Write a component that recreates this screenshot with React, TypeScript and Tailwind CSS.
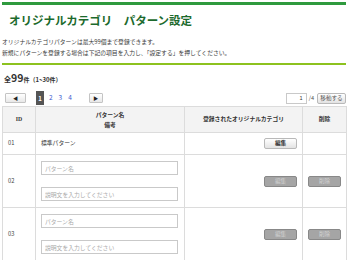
import React from "react";

const rows = [
  { id: "01", fixed: "標準パターン" },
  { id: "02" },
  { id: "03" },
];

const LightButton: React.FC<{ children: React.ReactNode; className?: string }> = ({ children, className }) => (
  <button
    className={`h-[11px] rounded-[2px] border border-[#b9b9b9] bg-gradient-to-b from-white to-[#e3e3e3] text-[5.6px] font-bold leading-[9px] text-[#333] ${className ?? ""}`}
  >
    {children}
  </button>
);

const GrayButton: React.FC<{ children: React.ReactNode }> = ({ children }) => (
  <button className="h-[11px] w-[33px] rounded-[2px] border border-[#888] bg-[#a5a5a5] text-[5.6px] leading-[9px] text-[#d2d2d2]">
    {children}
  </button>
);

export default function App() {
  return (
    <div className="h-[260px] w-[348px] overflow-hidden bg-white px-[2px] pt-[2px] font-['Noto_Sans_CJK_JP',sans-serif] text-[#333]">
      <div className="h-[3px] bg-[#2f9a3e]" />

      <h1 className="ml-[7px] mt-[8px] text-[11.5px] font-bold leading-[14px] text-[#1c6a2d]">
        オリジナルカテゴリ　パターン設定
      </h1>

      <p className="mt-[10px] text-[5.8px] leading-[10.5px] text-[#3a3a3a]">
        オリジナルカテゴリパターンは最大99個まで登録できます。
        <br />
        新規にパターンを登録する場合は下記の項目を入力し、「設定する」を押してください。
      </p>

      <div className="mt-[5px] h-[2px] bg-[#8dc21f]" />

      {/* count */}
      <div className="ml-[2px] mt-[7px] flex items-baseline font-bold leading-[12px] text-[#333]">
        <span className="text-[7px]">全</span>
        <span className="text-[10.5px]">99</span>
        <span className="text-[6px]">件（1~30件）</span>
      </div>

      {/* pager */}
      <div className="mt-[5px] flex h-[14px] items-center">
        <button className="ml-[3px] flex h-[10px] w-[21px] items-center justify-center rounded-[1px] border border-[#c4c4c4] bg-gradient-to-b from-white to-[#e8e8e8] text-[5px] text-[#222]">
          ◀
        </button>
        <span className="ml-[10px] flex h-[14px] w-[8px] items-center justify-center bg-[#555] text-[6px] font-bold text-white">
          1
        </span>
        <span className="ml-[5px] text-[6.5px] text-[#3a5bd0]">2</span>
        <span className="ml-[6px] text-[6.5px] text-[#3a5bd0]">3</span>
        <span className="ml-[6px] text-[6.5px] text-[#3a5bd0]">4</span>
        <button className="ml-[17px] flex h-[10px] w-[14px] items-center justify-center rounded-[1px] border border-[#c4c4c4] bg-gradient-to-b from-white to-[#e8e8e8] text-[5px] text-[#222]">
          ▶
        </button>
        <div className="flex-1" />
        <div className="flex h-[11px] w-[21px] items-center justify-end border border-[#c9c9c9] pr-[3px] text-[5.6px]">
          1
        </div>
        <span className="ml-[2px] text-[5.6px] text-[#555]">/4</span>
        <LightButton className="ml-[3px] w-[29px] font-normal text-[#555]">移動する</LightButton>
      </div>

      {/* table */}
      <table className="mt-[1px] w-[344px] table-fixed border-collapse text-[5.8px] text-[#333]">
        <colgroup>
          <col className="w-[33px]" />
          <col className="w-[149px]" />
          <col className="w-[118px]" />
          <col className="w-[44px]" />
        </colgroup>
        <thead>
          <tr className="h-[26px] bg-[#f3f3f3] font-bold">
            <th className="border border-[#dcdcdc] font-['Liberation_Serif',serif]">ID</th>
            <th className="border border-[#dcdcdc] leading-[10px]">
              パターン名
              <br />
              備考
            </th>
            <th className="border border-[#dcdcdc]">登録されたオリジナルカテゴリ</th>
            <th className="border border-[#dcdcdc]">削除</th>
          </tr>
        </thead>
        <tbody>
          {rows.map((row) =>
            row.fixed ? (
              <tr key={row.id} className="h-[22px]">
                <td className="border border-[#dcdcdc] pl-[5px] text-[#444]">{row.id}</td>
                <td className="border border-[#dcdcdc] pl-[5px]">{row.fixed}</td>
                <td className="border border-[#dcdcdc] pr-[5px] text-right">
                  <LightButton className="w-[33px]">編集</LightButton>
                </td>
                <td className="border border-[#dcdcdc]" />
              </tr>
            ) : (
              <tr key={row.id} className="h-[53px]">
                <td className="border border-[#dcdcdc] pl-[5px] text-[#444]">{row.id}</td>
                <td className="border border-[#dcdcdc] px-[5px]">
                  <div className="flex w-[137px] flex-col gap-[12px]">
                    <input
                      placeholder="パターン名"
                      className="h-[14px] border border-[#c9c9c9] px-[3px] text-[5.8px] placeholder:text-[#aaa]"
                    />
                    <input
                      placeholder="説明文を入力してください"
                      className="h-[14px] border border-[#c9c9c9] px-[3px] text-[5.8px] placeholder:text-[#aaa]"
                    />
                  </div>
                </td>
                <td className="border border-[#dcdcdc] pr-[5px] text-right">
                  <GrayButton>編集</GrayButton>
                </td>
                <td className="border border-[#dcdcdc] text-center">
                  <GrayButton>削除</GrayButton>
                </td>
              </tr>
            )
          )}
        </tbody>
      </table>
    </div>
  );
}
